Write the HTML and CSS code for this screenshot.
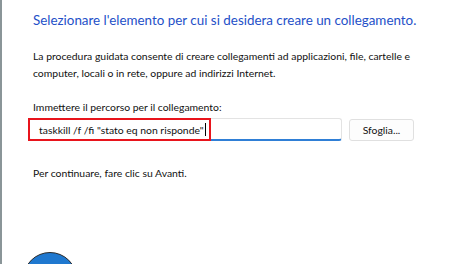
FILE: index.html
```html
<!DOCTYPE html>
<html lang="it">
<head>
  <meta charset="UTF-8">
  <title>Crea collegamento</title>
  <link rel="stylesheet" href="styles.css">
</head>
<body>
  <div class="window">
    <div class="content">
      <h1 class="heading">Selezionare l'elemento per cui si desidera creare un collegamento.</h1>

      <p class="intro">La procedura guidata consente di creare collegamenti ad applicazioni, file, cartelle e<br>computer, locali o in rete, oppure ad indirizzi Internet.</p>

      <label class="path-label">Immettere il percorso per il collegamento:</label>
      <div class="path-row">
        <div class="path-box">
          <span class="marked">taskkill /f /fi "stato eq non risponde"<span class="caret"></span></span>
        </div>
        <button class="browse">Sfoglia...</button>
      </div>

      <p class="hint">Per continuare, fare clic su Avanti.</p>
    </div>
    <div class="logo"></div>
  </div>
</body>
</html>
```

FILE: styles.css
```css
* { box-sizing: border-box; }

html, body {
  margin: 0;
  background: #ffffff;
}

body {
  font-family: 'Lato', sans-serif;
  color: #111;
  overflow: hidden;
}

.window {
  height: 264px;
  border-left: 2px solid #8a9598;
  position: relative;
  overflow: hidden;
}

.content {
  padding: 8px 0 0 31px;
  white-space: nowrap;
}

.heading {
  margin: 0;
  font-size: 13.4px;
  font-weight: normal;
  color: #2450c8;
  line-height: 24px;
}

.intro {
  margin: 16px 0 0;
  font-size: 10.4px;
  line-height: 17px;
}

.path-label {
  display: block;
  margin-top: 17px;
  font-size: 10.4px;
  line-height: 17px;
}

.path-row {
  display: flex;
  align-items: center;
  gap: 7px;
  margin-left: -5px;
  margin-top: 2px;
}

.path-box {
  width: 314px;
  height: 23px;
  border: 1px solid #e3e3e3;
  border-bottom: 2px solid #2f7fd6;
  border-radius: 3px;
  display: flex;
  align-items: stretch;
  font-size: 10.4px;
}

.marked {
  display: flex;
  align-items: center;
  margin: -1px 0 -2px -1px;
  padding: 0 3px 0 9px;
  border: 2px solid #e8141c;
}

.caret {
  display: inline-block;
  width: 1px;
  height: 13px;
  background: #000;
  margin-left: 1px;
}

.browse {
  width: 65px;
  height: 22px;
  font-family: inherit;
  font-size: 10.4px;
  color: #111;
  background: #fdfdfd;
  border: 1px solid #e0e0e0;
  border-radius: 3px;
  padding: 0;
}

.hint {
  margin: 24px 0 0;
  font-size: 10.4px;
  line-height: 17px;
}

.logo {
  position: absolute;
  left: 21px;
  top: 252px;
  width: 54px;
  height: 54px;
  border-radius: 50%;
  background: #1f78cf;
  border: 1.5px solid #2b2b2b;
}
```
